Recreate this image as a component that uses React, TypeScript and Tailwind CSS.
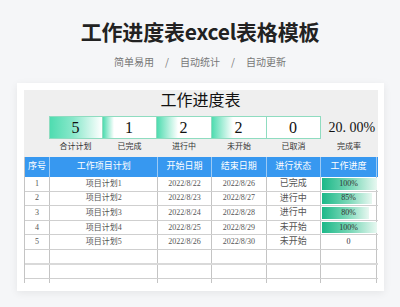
const cols = ["w-[26px]", "w-[108px]", "w-[54px]", "w-[55px]", "w-[54px]", "w-[57px]"];

const headers = ["序号", "工作项目计划", "开始日期", "结束日期", "进行状态", "工作进度"];

const rows = [
  { no: "1", name: "项目计划1", start: "2022/8/22", end: "2022/8/26", state: "已完成", pct: "100%", bar: "w-[55px]" },
  { no: "2", name: "项目计划2", start: "2022/8/23", end: "2022/8/27", state: "进行中", pct: "85%", bar: "w-[50px]" },
  { no: "3", name: "项目计划3", start: "2022/8/24", end: "2022/8/28", state: "进行中", pct: "80%", bar: "w-[47px]" },
  { no: "4", name: "项目计划4", start: "2022/8/25", end: "2022/8/29", state: "未开始", pct: "100%", bar: "w-[55px]" },
  { no: "5", name: "项目计划5", start: "2022/8/26", end: "2022/8/30", state: "未开始", pct: "0", bar: "" },
];

const stats = [
  { value: "5", label: "合计计划", w: "w-[54px]", fill: "w-full", grad: "bg-[linear-gradient(90deg,#4fdcb0_0%,#8ae8cb_45%,#ffffff_100%)]" },
  { value: "1", label: "已完成", w: "w-[54px]", fill: "w-[22%]", grad: "bg-[linear-gradient(90deg,#4fdcb0,#ffffff)]" },
  { value: "2", label: "进行中", w: "w-[55px]", fill: "w-[40%]", grad: "bg-[linear-gradient(90deg,#4fdcb0,#ffffff)]" },
  { value: "2", label: "未开始", w: "w-[55px]", fill: "w-[40%]", grad: "bg-[linear-gradient(90deg,#4fdcb0,#ffffff)]" },
  { value: "0", label: "已取消", w: "w-[54px]", fill: "w-0", grad: "" },
];

const serif = "font-['Liberation_Serif','Noto_Sans_CJK_SC',serif]";

function StatBox({ s, first }: { s: (typeof stats)[number]; first: boolean }) {
  return (
    <div className={`flex flex-col ${s.w}`}>
      <div
        className={`relative h-[23px] border-y border-r border-[#8fdcc0] bg-white ${first ? "border-l" : ""}`}
      >
        <div className={`absolute inset-y-0 left-0 ${s.fill} ${s.grad}`} />
        <div className={`relative text-center text-[16px] leading-[21px] text-[#111] ${serif}`}>{s.value}</div>
      </div>
      <div className="mt-[2px] text-center text-[8px] leading-[10px] text-[#333]">{s.label}</div>
    </div>
  );
}

export default function App() {
  return (
    <div className="flex h-[307px] w-[400px] flex-col items-center overflow-hidden bg-[#f5f6f8] font-['Noto_Sans_CJK_SC',sans-serif]">
      <h1 className="mt-[19px] h-[24px] text-[21px] font-bold leading-[24px] tracking-[-0.2px] text-[#222]">
        工作进度表excel表格模板
      </h1>
      <div className="mt-[13px] flex h-[12px] items-center gap-[11px] text-[10px] leading-[12px] text-[#777]">
        <span>简单易用</span>
        <span>/</span>
        <span>自动统计</span>
        <span>/</span>
        <span>自动更新</span>
      </div>

      <div className="mt-[15px] h-[208px] w-[367px] bg-white pl-[7px] pr-[6px] pt-[7px] shadow-[0_2px_8px_rgba(0,0,0,0.07)]">
        <div className="w-[354px]">
          {/* sheet top */}
          <div className="flex h-[67px] flex-col bg-[#efefef]">
            <div className="h-[18px] text-center text-[16px] leading-[18px] text-[#111]">工作进度表</div>
            <div className="mt-[8px] flex">
              <div className="w-[25px]" />
              {stats.map((s, i) => (
                <StatBox key={i} s={s} first={i === 0} />
              ))}
              <div className="flex w-[57px] flex-col">
                <div className={`h-[23px] whitespace-nowrap pl-[8px] text-[14px] leading-[23px] text-[#111] ${serif}`}>
                  20. 00%
                </div>
                <div className="mt-[2px] text-center text-[8px] leading-[10px] text-[#333]">完成率</div>
              </div>
            </div>
          </div>

          {/* table */}
          <div className="h-[126px] overflow-hidden border-l border-[#c4c4c4]">
            <div className="flex h-[20px] bg-[#3798f0]">
              {headers.map((h, i) => (
                <div
                  key={i}
                  className={`${cols[i]} flex items-center justify-center border-r border-[#9ccaf5] text-[9px] text-white ${serif}`}
                >
                  {h}
                </div>
              ))}
            </div>
            {rows.map((r) => (
              <div key={r.no} className={`flex h-[14.6px] border-b border-[#cfcfcf] text-[8px] text-[#555] ${serif}`}>
                <div className={`${cols[0]} flex items-center justify-center border-r border-[#c4c4c4]`}>{r.no}</div>
                <div className={`${cols[1]} flex items-center justify-center border-r border-[#c4c4c4]`}>{r.name}</div>
                <div className={`${cols[2]} flex items-center justify-center border-r border-[#c4c4c4]`}>{r.start}</div>
                <div className={`${cols[3]} flex items-center justify-center border-r border-[#c4c4c4]`}>{r.end}</div>
                <div className={`${cols[4]} flex items-center justify-center border-r border-[#c4c4c4] text-[9px]`}>
                  {r.state}
                </div>
                <div className={`${cols[5]} relative flex items-center justify-center border-r border-[#c4c4c4]`}>
                  {r.bar && (
                    <div
                      className={`absolute left-[1px] top-[1px] bottom-[1px] ${r.bar} bg-[linear-gradient(90deg,#1cb888_0%,#7fd9ba_55%,#e8f8f1_100%)]`}
                    />
                  )}
                  <span className="relative text-[#333]">{r.pct}</span>
                </div>
              </div>
            ))}
            {[0, 1, 2].map((k) => (
              <div key={k} className={`flex h-[14.6px] border-b ${k === 0 ? "border-[#d9d9d9] border-b-2" : "border-[#cfcfcf]"}`}>
                {cols.map((c, i) => (
                  <div key={i} className={`${c} border-r border-[#c4c4c4]`} />
                ))}
              </div>
            ))}
          </div>
        </div>
      </div>
    </div>
  );
}
